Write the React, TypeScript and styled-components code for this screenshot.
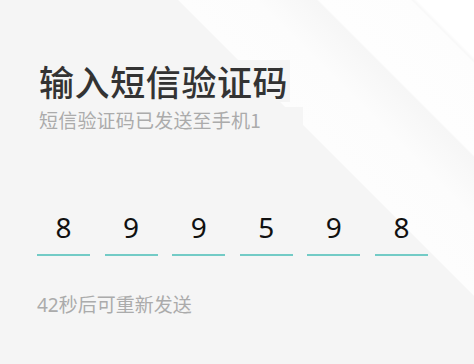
import styled, { createGlobalStyle } from 'styled-components'

const GlobalStyle = createGlobalStyle`
  html, body {
    margin: 0;
    padding: 0;
  }

  body {
    font-family: 'Noto Sans', 'Noto Sans CJK SC', sans-serif;
    background-color: #f5f5f5;
    background-image: linear-gradient(
      45deg,
      #f5f5f5 0 64.6%,
      #fdfdfd 64.8%,
      #fcfcfc 74%,
      #f6f6f6 81.2%,
      #fefefe 81.5%,
      #fdfdfd 92.4%,
      #f8f8f8 92.7%,
      #ffffff 93.2%
    );
    min-height: 100vh;
  }
`

const Pagina = styled.main`
  display: flex;
  flex-direction: column;
  align-items: flex-start;
  padding: 60px 0 0 37px;
  min-height: 100vh;
  box-sizing: border-box;
`

const Titulo = styled.h1`
  margin: 0 0 0 -37px;
  padding: 0 2px 0 39px;
  background: #f5f5f5;
  color: #333333;
  font-family: 'Noto Sans CJK SC', sans-serif;
  font-size: 35px;
  font-weight: 500;
  line-height: 42px;
  letter-spacing: 0.6px;
`

const Subtitulo = styled.p`
  margin: 5px 0 0 -37px;
  padding: 0 42px 0 39px;
  background: #f5f5f5;
  color: #ababab;
  font-family: 'Noto Sans CJK SC', sans-serif;
  font-size: 19px;
  line-height: 26px;
  letter-spacing: 0.2px;
  white-space: nowrap;
`

const LinhaCodigo = styled.div`
  display: flex;
  gap: 14.6px;
  margin-top: 77px;
`

const Celula = styled.div`
  display: flex;
  flex-direction: column;
  align-items: center;
  width: 53px;
`

const Digito = styled.span`
  color: #111111;
  font-family: 'Noto Sans', sans-serif;
  font-size: 28px;
  line-height: 34px;
`

const Sublinhado = styled.span<{ $ativo?: boolean }>`
  display: block;
  width: 100%;
  height: 2px;
  margin-top: 10px;
  background: ${p => (p.$ativo ? '#73cbc6' : '#dddddd')};
`

const Reenviar = styled.p`
  margin: 36px 0 0 0;
  color: #ababab;
  font-family: 'Noto Sans', 'Noto Sans CJK SC', sans-serif;
  font-size: 19px;
  line-height: 26px;
`

const codigo = ['8', '9', '9', '5', '9', '8']

const App = () => {
  return (
    <>
      <GlobalStyle />
      <Pagina>
        <Titulo>输入短信验证码</Titulo>
        <Subtitulo>短信验证码已发送至手机1</Subtitulo>

        <LinhaCodigo>
          {codigo.map((d, i) => (
            <Celula key={i}>
              <Digito>{d}</Digito>
              <Sublinhado $ativo />
            </Celula>
          ))}
        </LinhaCodigo>

        <Reenviar>42秒后可重新发送</Reenviar>
      </Pagina>
    </>
  )
}

export default App
